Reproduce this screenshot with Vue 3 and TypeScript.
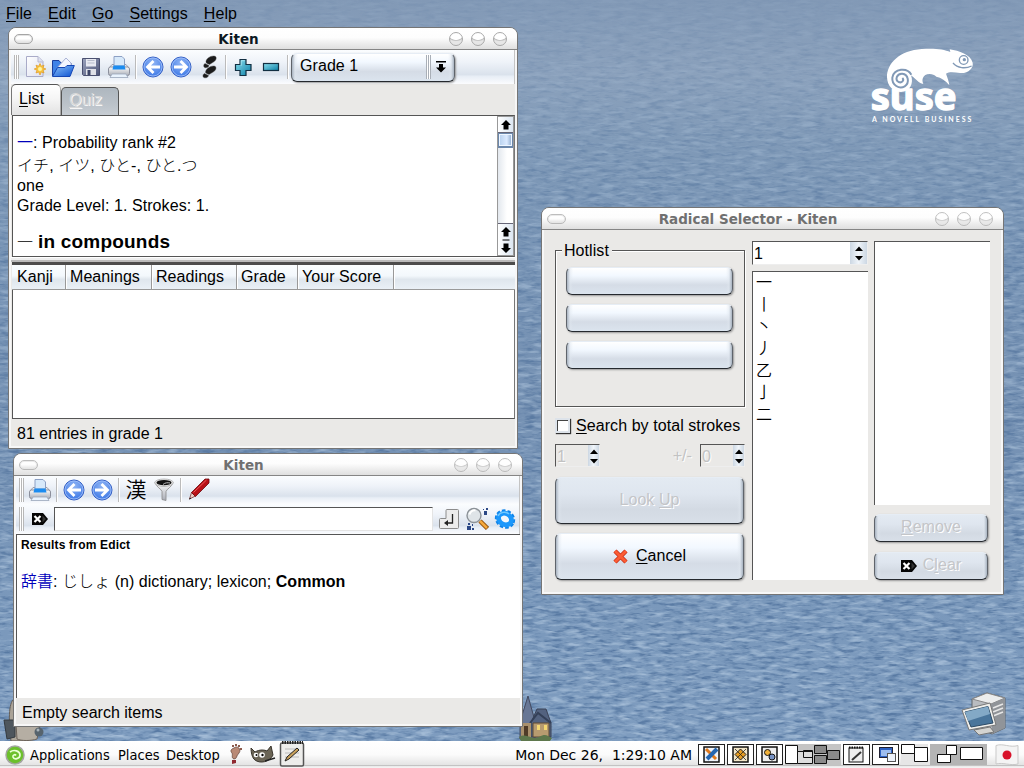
<script setup lang="ts">
type Item = { id: string; kind: 'icon' | 'sep' }
const icon = (id: string): Item => ({ id, kind: 'icon' })
const sep = (id: string): Item => ({ id, kind: 'sep' })

const menus: string[] = ['File', 'Edit', 'Go', 'Settings', 'Help']
const mainTools: Item[] = [
  icon('new'), icon('open'), icon('save'), icon('print'), sep('a'),
  icon('back'), icon('forward'), icon('feet'), sep('b'),
  icon('plus'), icon('minus'), sep('c'),
]
const searchTools: Item[] = [
  icon('print'), sep('a'), icon('back'), icon('forward'), sep('b'),
  icon('kanji'), icon('funnel'), sep('c'), icon('pencil'),
]
const columns = [
  { label: 'Kanji', w: 53 },
  { label: 'Meanings', w: 86 },
  { label: 'Readings', w: 85 },
  { label: 'Grade', w: 61 },
  { label: 'Your Score', w: 96 },
]
const radicals: string[] = ['一', '丨', '丶', '丿', '乙', '亅', '二']
</script>

<template>
  <div class="desktop">
    <svg class="defs" width="0" height="0" aria-hidden="true">
      <defs>
        <radialGradient id="gBlue" cx=".5" cy=".3" r=".7">
          <stop offset="0" stop-color="#8fb4f4" /><stop offset="1" stop-color="#3c78e6" />
        </radialGradient>
        <linearGradient id="gFolder" x1="0" y1="0" x2="1" y2="1">
          <stop offset="0" stop-color="#8cc4fb" /><stop offset="1" stop-color="#0a4fd0" />
        </linearGradient>
        <linearGradient id="gTeal" x1="0" y1="0" x2="1" y2="1">
          <stop offset="0" stop-color="#8ce0ee" /><stop offset="1" stop-color="#0a7ea6" />
        </linearGradient>
        <linearGradient id="gGrey" x1="0" y1="0" x2="0" y2="1">
          <stop offset="0" stop-color="#fdfdfd" /><stop offset="1" stop-color="#a9adb6" />
        </linearGradient>
        <linearGradient id="gSave" x1="0" y1="0" x2="1" y2="1">
          <stop offset="0" stop-color="#9ba3bd" /><stop offset="1" stop-color="#4d5577" />
        </linearGradient>
        <linearGradient id="gSheet" x1="0" y1="0" x2="1" y2="1">
          <stop offset="0" stop-color="#fff" /><stop offset="1" stop-color="#dcdff0" />
        </linearGradient>
      </defs>
      <symbol id="i-new" viewBox="0 0 24 24">
        <path d="M3.500 1.500H15L20 6.500V21.500H3.500Z" fill="url(#gSheet)" stroke="#a9abc8" />
        <path d="M15 1.500V7H20" fill="#dfe1f0" stroke="#b5b7d0" />
        <path d="M17 8.500l1.300 2.700 2.700-1-1 2.700 2.900 1.100-2.900 1.300 1 2.700-2.700-1L17 20l-1.300-3-2.700 1 1-2.700-2.800-1.300 2.800-1.100-1-2.700 2.700 1z" fill="#f8c440" stroke="#e19a20" stroke-width=".7" />
        <circle cx="17" cy="14" r="2" fill="#fff5a0" />
      </symbol>
      <symbol id="i-open" viewBox="0 0 24 24">
        <path d="M1.500 21V5.500H8L10 8H20V12" fill="#3f83e8" stroke="#1c3f9c" />
        <path d="M6 13L15 3l5 5v6z" fill="#f3f6ff" stroke="#aab4d6" />
        <path d="M1.500 21.500L6.500 12.500H14L16 10.500H23.300L19 21.500Z" fill="url(#gFolder)" stroke="#1546b4" />
      </symbol>
      <symbol id="i-save" viewBox="0 0 24 24">
        <path d="M3.500 3.500H20.500V20.500H4.500L3.500 19.500Z" fill="url(#gSave)" stroke="#4a5070" />
        <path d="M7 4H17V11.500H7Z" fill="#e8eaf2" /><path d="M8.500 5.500h7M8.500 8h7" stroke="#b7bccb" />
        <path d="M7 14h10v6H7Z" fill="#dfe1e8" /><path d="M8.500 15h3v5h-3z" fill="#3d4668" />
      </symbol>
      <symbol id="i-print" viewBox="0 0 24 24">
        <path d="M2.500 12.500L5 9.500H19L21.500 12.500Z" fill="#e8e9ee" stroke="#999dab" />
        <path d="M7 11V1.500H15L17.500 4V11Z" fill="#d7e9fa" stroke="#8ca0c4" />
        <rect x="1.500" y="12" width="21" height="8.500" rx="2" fill="url(#gGrey)" stroke="#8b8f9c" />
        <path d="M6.500 10.500H17.500L18.500 14.500H5.500Z" fill="#1b8cf0" />
        <path d="M5 19H19L21 22.500H3Z" fill="#e9f3fd" stroke="#99a6ba" stroke-width=".8" />
      </symbol>
      <symbol id="i-back" viewBox="0 0 24 24">
        <circle cx="12" cy="12" r="10" fill="url(#gBlue)" stroke="#3560c4" />
        <circle cx="12" cy="12" r="9" fill="none" stroke="#a5c3fa" stroke-width=".8" />
        <path d="M19 12H7M12.500 6L6.500 12l6 6" fill="none" stroke="#fff" stroke-width="2.800" />
      </symbol>
      <symbol id="i-forward" viewBox="0 0 24 24">
        <circle cx="12" cy="12" r="10" fill="url(#gBlue)" stroke="#3560c4" />
        <circle cx="12" cy="12" r="9" fill="none" stroke="#a5c3fa" stroke-width=".8" />
        <path d="M5 12H17M11.500 6l6 6-6 6" fill="none" stroke="#fff" stroke-width="2.800" />
      </symbol>
      <symbol id="i-feet" viewBox="0 0 24 24">
        <g fill="#1c1c1c" stroke="#4a4a4a" stroke-width=".4">
          <path d="M9 7.500C8.500 4 13 .8 17 1C20.500 1.200 19.500 5.500 16.500 7L12.500 9.500C11 9 10 8.500 9 7.500Z" />
          <path d="M8 8.500L12 10.500C11.500 13 7.500 13.500 6.800 11.500C6.500 10 7 9 8 8.500Z" />
          <path d="M8.500 17.500C8.500 14 13 10.800 17 11C20 11.200 19.500 15 16.500 16.800L12 19.500C10.500 19 9.500 18.500 8.500 17.500Z" />
          <path d="M7.500 18.500L11.500 20.500C11 23.300 6.500 23.500 6 21.500C5.700 20 6.500 19 7.500 18.500Z" />
        </g>
      </symbol>
      <symbol id="i-plus" viewBox="0 0 24 24">
        <path d="M9 4.500H15V9.500H20V15.500H15V20.500H9V15.500H4.500V9.500H9Z" fill="url(#gTeal)" stroke="#122f42" stroke-width="1.200" />
        <path d="M10.200 10.700V5.700h3.600" fill="none" stroke="#aeeaf4" stroke-width=".8" />
      </symbol>
      <symbol id="i-minus" viewBox="0 0 24 24">
        <rect x="4.500" y="8.500" width="15" height="7" fill="url(#gTeal)" stroke="#122f42" stroke-width="1.200" />
      </symbol>
      <symbol id="i-funnel" viewBox="0 0 24 24">
        <path d="M3 4.500C4 9 9.500 11 10 13.500V21.500L14 22.500V13.500C14.500 11 20 9 21 4.500Z" fill="url(#gGrey)" stroke="#888" stroke-width=".8" />
        <ellipse cx="12" cy="4.700" rx="9.300" ry="3.700" fill="#e6e6e6" stroke="#aaa" stroke-width=".8" />
        <ellipse cx="12" cy="4.700" rx="7.500" ry="2.600" fill="#111" /><path d="M11 6.500C13 4.500 16 4.500 18 5" stroke="#bbb" fill="none" />
      </symbol>
      <symbol id="i-pencil" viewBox="0 0 24 24">
        <path d="M3.500 21L5.500 14.500 9.500 18Z" fill="#e9cfc8" stroke="#6d2020" stroke-width=".7" />
        <path d="M5.500 14.500L19 1H23V5L9.500 18.500Z" fill="#b81016" stroke="#6b070b" stroke-width=".8" />
        <path d="M7.500 14.500L20.500 2" stroke="#ee5a5a" /><path d="M3 21.500l1-2 1.200 1.200z" fill="#111" />
      </symbol>
      <symbol id="i-clear" viewBox="0 0 16 14">
        <path d="M0 1H11L16 7 11 13H0Z" fill="#050505" />
        <path d="M2.500 4l6 6M8.500 4l-6 6" stroke="#fff" stroke-width="2.200" />
        <path d="M10.500 3.500V10.500L14 7Z" fill="#333" />
      </symbol>
      <symbol id="i-updown" viewBox="0 0 10 22">
        <path d="M1 9L5 4.500 9 9ZM1 14L5 18.500 9 14Z" />
      </symbol>
    </svg>

    <svg class="water" width="1024" height="768">
      <filter id="ripple" x="0" y="0" width="100%" height="100%" color-interpolation-filters="sRGB">
        <feTurbulence type="fractalNoise" baseFrequency="0.08 0.3" numOctaves="3" seed="8" />
        <feColorMatrix values="0 0 0 0 .24  0 0 0 0 .38  0 0 0 0 .56  3 0 0 0 -1.350" />
      </filter>
      <filter id="glint" x="0" y="0" width="100%" height="100%" color-interpolation-filters="sRGB">
        <feTurbulence type="fractalNoise" baseFrequency="0.06 0.26" numOctaves="3" seed="21" />
        <feColorMatrix values="0 0 0 0 .74  0 0 0 0 .82  0 0 0 0 .9  3 0 0 0 -1.400" />
      </filter>
      <linearGradient id="fade" x1="0" y1="0" x2="0" y2="1">
        <stop offset="0" stop-color="#222" /><stop offset=".12" stop-color="#555" /><stop offset=".35" stop-color="#aaa" /><stop offset="1" stop-color="#fff" />
      </linearGradient>
      <mask id="depth"><rect width="1024" height="768" fill="url(#fade)" /></mask>
      <g mask="url(#depth)">
        <rect width="1024" height="768" filter="url(#ripple)" />
        <rect width="1024" height="768" filter="url(#glint)" />
      </g>
    </svg>

    <nav class="menubar">
      <span v-for="m in menus" :key="m"><u>{{ m[0] }}</u>{{ m.slice(1) }}</span>
    </nav>

    <svg class="suse" viewBox="0 0 450 300">
      <path fill="#fff" d="M111 142C110 100 150 61 215 57C250 54 282 57 301 66L299 58C327 62 362 74 368 98C371 114 355 131 330 129C312 127 298 125 288 131C293 145 297 155 298 166C288 152 273 143 259 140C251 131 235 130 226 135C216 143 216 152 220 162C209 160 202 153 197 148C191 142 186 138 183 136C192 160 180 186 153 186C129 186 112 168 111 142Z" />
      <path d="M184 134C172 112 132 114 127 143C125 166 148 178 164 169C180 158 175 133 157 131C140 130 134 149 146 156C155 160 164 151 157 144" fill="none" stroke="#8199b6" stroke-width="6" />
      <circle cx="341" cy="90" r="13" fill="none" stroke="#8199b6" stroke-width="4" />
      <circle cx="343" cy="89" r="5" fill="#8199b6" />
      <path d="M309 99C323 115 346 117 365 108" fill="none" stroke="#8199b6" stroke-width="4" />
      <text x="62" y="239" class="suse-word" textLength="258" lengthAdjust="spacingAndGlyphs">suse</text>
      <text x="66" y="275" class="suse-tag" textLength="298">A NOVELL BUSINESS</text>
    </svg>

    <svg class="trash" viewBox="0 0 42 46">
      <path d="M8 44C6 30 5 8 10 3H25V44Z" fill="#aaa398" stroke="#665f58" />
      <path d="M1 23H12V40L4 42Z" fill="#4e565d" stroke="#343a40" />
      <path d="M13 27H37L34 42C28 44 18 44 14 42Z" fill="#b5aea3" stroke="#6b6259" />
      <circle cx="36" cy="35" r="4.500" fill="#56636d" /><circle cx="35" cy="33" r="1.500" fill="#a8b3ba" />
    </svg>
    <svg class="house" viewBox="0 0 36 46">
      <path d="M3 26L11 0L18 25V43H3Z" fill="#687795" stroke="#434a60" />
      <path d="M14 27L20 13 29 13 34 27V41H14Z" fill="#53627f" stroke="#3a4256" />
      <path d="M16 27H32V41H16Z" fill="#b79b70" stroke="#5c4934" />
      <path d="M13 27L21 17 34 27" fill="none" stroke="#344058" stroke-width="2" />
      <path d="M20 29h3v5h-3zM27 29h3v5h-3z" fill="#f5d872" />
      <path d="M4 27H14V42H4Z" fill="#a9906c" /><path d="M7 30h4v11H7Z" fill="#4f3b28" />
      <path d="M2 41C10 36 15 45 22 41S30 40 35 42L33 45H4Z" fill="#5d774c" />
    </svg>
    <svg class="computer" viewBox="0 0 48 44">
      <path d="M11 7L26 1 44 6V36L31 42 11 34Z" fill="#b9bcc0" stroke="#606469" />
      <path d="M11 7L26 1 44 6 30 12Z" fill="#eceded" stroke="#888" />
      <path d="M30 12L44 6V36L31 42Z" fill="#909499" />
      <path d="M32 16l10-4M32 20l10-4M32 24l10-4" stroke="#e7e7e7" stroke-width="1.500" />
      <path d="M1 18L29 11 35 33 8 38Z" fill="#f0efeb" stroke="#777" />
      <path d="M4 20L27 14.500 32 31 10 35Z" fill="#49759b" stroke="#2b4a66" />
      <path d="M4 20L27 14.500 29 22 7 29Z" fill="#83a9c6" />
      <path d="M13 38L29 35 33 40 18 43Z" fill="#d4d4d1" stroke="#777" />
    </svg>

    <!-- Kanji browser -->
    <section class="win win-main">
      <header class="title active"><i class="pill"></i><b>Kiten</b><i class="orb"></i><i class="orb"></i><i class="orb"></i></header>
      <div class="toolbar t-main">
        <i class="grip"></i>
        <template v-for="t in mainTools" :key="t.id">
          <i v-if="t.kind === 'sep'" class="sep"></i>
          <span v-else class="cell"><svg width="24" height="24"><use :href="'#i-' + t.id" /></svg></span>
        </template>
        <div class="btn combo">
          <span>Grade 1</span><i class="ridges"></i>
          <svg width="10" height="12" viewBox="0 0 10 12"><path d="M0 0H10V1.500H0ZM3 3H7V6.500H10L5 11.500 0 6.500H3Z" /></svg>
        </div>
      </div>
      <div class="tabs"><span class="tab on"><u>L</u>ist</span><span class="tab off"><u>Q</u>uiz</span></div>
      <div class="info">
        <div class="info-text">
          <p class="l1"><a>一</a>: Probability rank #2</p>
          <p class="l2">イチ, イツ, ひと-, ひと.つ</p>
          <p class="l3">one</p>
          <p class="l4">Grade Level: 1. Strokes: 1.</p>
          <h3><span>一</span> in compounds</h3>
        </div>
        <div class="scroll">
          <span class="sbtn"><svg width="10" height="10" viewBox="0 0 10 10"><path d="M5 0L10 5H7.500V9.500H2.500V5H0Z" /></svg></span>
          <span class="thumb"></span><span class="track"></span>
          <span class="sbtn double"><svg width="10" height="26" viewBox="0 0 10 26"><path d="M5 0L10 5H7.500V9.500H2.500V5H0ZM1.500 12.500H8.500V13.500H1.500ZM5 26L10 21H7.500V16.500H2.500V21H0Z" /></svg></span>
        </div>
      </div>
      <div class="splitter"></div>
      <div class="thead"><span v-for="c in columns" :key="c.label" :style="{ width: c.w + 'px' }">{{ c.label }}</span></div>
      <div class="tbody"></div>
      <footer>81 entries in grade 1</footer>
    </section>

    <!-- Dictionary search -->
    <section class="win win-search">
      <header class="title"><i class="pill"></i><b>Kiten</b><i class="orb"></i><i class="orb"></i><i class="orb"></i></header>
      <div class="toolbar t-search">
        <i class="grip"></i>
        <template v-for="t in searchTools" :key="t.id">
          <i v-if="t.kind === 'sep'" class="sep"></i>
          <span v-else-if="t.id === 'kanji'" class="cell kanji">漢</span>
          <span v-else class="cell"><svg width="24" height="24"><use :href="'#i-' + t.id" /></svg></span>
        </template>
      </div>
      <div class="toolbar t-entry">
        <i class="grip"></i>
        <span class="cell"><svg width="16" height="14"><use href="#i-clear" /></svg></span>
        <div class="entry"></div>
        <span class="cell enter">
          <svg width="22" height="22" viewBox="0 0 22 22">
            <path d="M9 1.500H19.500Q20.500 1.500 20.500 2.500V19.500Q20.500 20.500 19.500 20.500H2.500Q1.500 20.500 1.500 19.500V11.500Q1.500 10.500 2.500 10.500H8V2.500Q8 1.500 9 1.500Z" fill="#ececec" stroke="#8c8c8c" />
            <path d="M14.500 6V15H8" fill="none" stroke="#222" stroke-width="1.300" /><path d="M6 15l4-3v6z" fill="#222" />
          </svg>
        </span>
        <span class="cell">
          <svg width="24" height="24" viewBox="0 0 24 24">
            <path d="M15 14L22.500 21.500" stroke="#8f4f0a" stroke-width="4.500" /><path d="M15 14L22 21" stroke="#f4a83c" stroke-width="2.500" />
            <circle cx="9" cy="8.500" r="7" fill="#dfe4e8" stroke="#8c9298" stroke-width="1.400" /><path d="M4.500 7.500a5 5 0 0 1 6-4" stroke="#fff" fill="none" stroke-width="2" />
            <path d="M19 4h3v4h-3zM21 1h2v2h-2zM18 2h1v1h-1zM2 19h4v4H2zM3 16h2v2H3zM7 17h1v2H7zM7 21h2v2H7z" fill="#2c4886" />
          </svg>
        </span>
        <span class="cell">
          <svg width="24" height="24" viewBox="0 0 24 24">
            <ellipse cx="12" cy="12" rx="8.800" ry="7.800" transform="rotate(30 12 12)" fill="none" stroke="#0f84ea" stroke-width="3.200" stroke-dasharray="3.400 1.900" />
            <ellipse cx="12" cy="12" rx="6.700" ry="5.500" transform="rotate(30 12 12)" fill="#f4f8fc" stroke="#1b97fb" stroke-width="4.800" />
            <path d="M5 9C7 5 13 4 16 7" fill="none" stroke="#6fc8ff" stroke-width="1.500" />
          </svg>
        </span>
      </div>
      <div class="results">
        <h4>Results from Edict</h4>
        <p><a>辞書</a>: じしょ (n) dictionary; lexicon; <b>Common</b></p>
      </div>
      <footer>Empty search items</footer>
    </section>

    <!-- Radical selector -->
    <section class="win win-radical">
      <header class="title"><i class="pill"></i><b>Radical Selector - Kiten</b><i class="orb"></i><i class="orb"></i><i class="orb"></i></header>
      <div class="dialog">
        <div class="col c1">
          <div class="group"><span class="legend">Hotlist</span>
            <div class="btn slot"></div><div class="btn slot"></div><div class="btn slot"></div>
          </div>
          <label class="check"><i></i><span><u>S</u>earch by total strokes</span></label>
          <div class="spins">
            <div class="spin dis"><span>1</span><i><svg width="10" height="22"><use href="#i-updown" /></svg></i></div>
            <span class="pm">+/-</span>
            <div class="spin dis"><span>0</span><i><svg width="10" height="22"><use href="#i-updown" /></svg></i></div>
          </div>
          <div class="btn big dim"><span>Look <u>U</u>p</span></div>
          <div class="btn big cancel">
            <svg width="15" height="15" viewBox="0 0 15 15">
              <path d="M2 2L13 13M13 2L2 13" stroke="#c42d14" stroke-width="4.500" /><path d="M2 2L13 13M13 2L2 13" stroke="#fb5b34" stroke-width="3" />
            </svg>
            <span><u>C</u>ancel</span>
          </div>
        </div>
        <div class="col c2">
          <div class="spin wide"><span>1</span><i><svg width="10" height="22"><use href="#i-updown" /></svg></i></div>
          <div class="list radicals"><span v-for="r in radicals" :key="r">{{ r }}</span></div>
        </div>
        <div class="col c3">
          <div class="list"></div>
          <div class="btn small dim"><span><u>R</u>emove</span></div>
          <div class="btn small dim"><svg width="16" height="14"><use href="#i-clear" /></svg><span>C<u>l</u>ear</span></div>
        </div>
      </div>
    </section>

    <!-- Panel -->
    <div class="panel">
      <svg class="geeko" width="20" height="20" viewBox="0 0 20 20">
        <circle cx="10" cy="10" r="9" fill="#6cc02c" stroke="#a3a7a0" stroke-width="1.500" />
        <path d="M5 7C9 4 15 6 15 10C15 14 9 15 8 12C7.500 10 10 9 11 10.500" fill="none" stroke="#eaffd8" stroke-width="1.700" />
      </svg>
      <span class="p1">Applications</span><span class="p2">Places</span><span class="p3">Desktop</span>
      <svg class="launch" width="80" height="27" viewBox="0 0 80 27">
        <path d="M7 7C10 4 15 8 12 12C9 15 10 18 7 18C4 17 6 14 5 12C3 10 4 8 7 7Z" fill="#b98a76" stroke="#5c3c30" stroke-width=".7" />
        <path d="M5 4h2v2H5zM8 3h2v2H8zM11 4h2v2h-2zM13 7h2v2h-2z" fill="#8c5b4c" /><path d="M5 19L9 19 9 22 5 23Z" fill="#8f2930" />
        <path d="M24 7L28 11C33 8 38 9 40 10L44 5 46 14C43 21 33 23 28 19C25 17 24 11 24 7Z" fill="#6b6556" stroke="#38342c" />
        <circle cx="29" cy="14" r="2.300" fill="#fff" /><circle cx="35" cy="14" r="2.800" fill="#fff" /><circle cx="29.500" cy="14" r="1" /><circle cx="35.500" cy="14" r="1.200" />
        <path d="M38 20L48 17" stroke="#222" stroke-width="1.500" />
        <rect x="53.500" y="2" width="23" height="23" rx="1.500" fill="#ededeb" stroke="#555" stroke-width="1.500" />
        <path d="M55 1.500H76" stroke="#222" stroke-width="3" stroke-dasharray="1.500 1" />
        <path d="M58 8h14M58 12h14M58 16h14" stroke="#bbb" /><path d="M58 20L60 16 70 7 72 9 62 18Z" fill="#c9a15b" stroke="#222" />
      </svg>
      <span class="clock">Mon Dec 26, &nbsp;1:29:10 AM</span>
      <svg class="tray" width="326" height="27" viewBox="698 741 326 27">
        <g fill="#fff" stroke="#222">
          <rect x="698.500" y="744.500" width="26" height="20" /><rect x="727.500" y="744.500" width="26" height="20" /><rect x="756.500" y="744.500" width="26" height="20" />
          <rect x="843.500" y="744.500" width="26" height="20" /><rect x="872.500" y="744.500" width="26" height="20" />
        </g>
        <rect x="785" y="744" width="56" height="21" fill="#c4c4c4" /><rect x="901" y="744" width="27" height="21" fill="#e6e6e6" /><rect x="930" y="744" width="57" height="21" fill="#b4b4b4" />
        <g stroke="#111" fill="#fff">
          <path d="M785.500 745.500h12v18h-12z" /><path d="M797.500 751.500h15v12h-15zM803.500 750.500h9v7h-9z" fill="#ddd" />
          <path d="M814.500 745.500h12v8h-12zM827.500 750.500h12v9h-12zM814.500 755.500h12v8h-12z" fill="#8a8a8a" />
          <path d="M901.500 744.500h13v9h-13zM914.500 747.500h13v14h-13z" /><path d="M946.500 745.500h10v9h-10zM937.500 754.500h13v8h-13zM960.500 747.500h22v12h-22z" />
        </g>
        <rect x="704" y="747" width="15" height="15" fill="#eef3fa" stroke="#111" stroke-width="1.500" /><path d="M706 749l10 10" stroke="#e07a1c" stroke-width="3" /><path d="M717 749l-10 10" stroke="#2466b0" stroke-width="4" />
        <rect x="733" y="747" width="15" height="15" fill="#f2e6c8" stroke="#111" stroke-width="1.500" /><path d="M740.500 749l5.500 5.500-5.500 5.500-5.500-5.500z" fill="#e59b20" stroke="#222" /><path d="M735 749l11 11M746 749l-11 11" stroke="#222" stroke-width=".8" />
        <rect x="762" y="747" width="15" height="15" fill="#eee" stroke="#111" stroke-width="1.500" /><circle cx="767.500" cy="752.500" r="3" fill="#f0b13a" stroke="#111" /><circle cx="772" cy="757" r="3" fill="#7893c4" stroke="#111" />
        <rect x="849" y="748" width="14" height="14" fill="#eee" stroke="#111" /><path d="M849 747.500h14" stroke="#111" stroke-width="2" stroke-dasharray="1.500 1" /><path d="M852 760l9-8" stroke="#333" stroke-width="2" />
        <rect x="879.500" y="747.500" width="13" height="10" fill="#2d62c4" stroke="#223" /><rect x="881" y="750" width="10" height="6" fill="#9dbdf0" /><rect x="887.500" y="753.500" width="8" height="8" fill="#eef3fb" stroke="#555" />
        <path d="M996 745.500C1003 743 1010 748 1018 745.500V764C1010 766 1003 762 996 764Z" fill="#f4f4f4" stroke="#c9c9c9" /><circle cx="1007" cy="755" r="4.500" fill="#d8122a" />
      </svg>
    </div>
  </div>
</template>

<style>
html, body { margin: 0; overflow: hidden; }
</style>

<style scoped>
* { box-sizing: border-box; }
.desktop {
  position: relative; width: 1024px; height: 768px; overflow: hidden; color: #000;
  font: 300 16px/20px "Liberation Sans", "Noto Sans CJK JP", sans-serif; letter-spacing: .07px; white-space: nowrap;
  background: linear-gradient(180deg, #8299b6 0, #8ba1bc 75px, #7f99b7 150px, #7894b5 260px, #7591b3 420px, #7a98bb 600px, #7f9dc0 768px);
}
.defs, .water { position: absolute; left: 0; top: 0; }
.water { opacity: .6; }
p, h3, h4 { margin: 0; }
b { font-weight: 700; }
u { text-underline-offset: 2px; text-decoration-thickness: 1px; text-decoration-skip-ink: none; }
a { color: #00b; font-weight: 350; }

.menubar { position: absolute; left: 6px; top: 4px; display: flex; gap: 16px; }
.suse { position: absolute; left: 850px; top: 30px; width: 150px; height: 100px; }
.suse-word { font: bold 115px "Noto Sans", "DejaVu Sans", sans-serif; letter-spacing: 0; fill: #fff; stroke: #fff; stroke-width: 4px; stroke-linejoin: round; }
.suse-tag { font: bold 21px Lato, sans-serif; fill: #fff; }
.trash { position: absolute; left: 3px; top: 697px; width: 42px; height: 46px; }
.house { position: absolute; left: 517px; top: 696px; width: 36px; height: 46px; }
.computer { position: absolute; left: 961px; top: 692px; width: 48px; height: 44px; }

.win {
  position: absolute; display: flex; flex-direction: column; background: #eae9e7;
  border: 1px solid #757575; border-radius: 8px 8px 0 0; box-shadow: inset 2px 0 #f7f7f7, inset -2px 0 #f7f7f7, inset 0 -2px #f7f7f7;
  padding: 0 2px 2px;
}
.win-main { left: 8px; top: 27px; width: 510px; height: 422px; }
.win-search { left: 13px; top: 453px; width: 510px; height: 274px; }
.win-radical { left: 541px; top: 207px; width: 463px; height: 388px; }

.title {
  position: relative; height: 22px; flex: none; margin: 0 -2px; padding: 0 10px 0 5px; display: flex; align-items: center; gap: 8px;
  border-bottom: 1px solid #858585; border-radius: 7px 7px 0 0; background: linear-gradient(#fff, #fdfdfd 45%, #dfdfdf);
  font: bold 13.5px "DejaVu Sans", sans-serif; letter-spacing: 0; color: #707070;
}
.title.active { color: #0c1822; }
.title b { flex: 1; text-align: center; padding-right: 5px; }
.pill { width: 19px; height: 10px; border: 1px solid #a5a5a5; border-radius: 6px; background: linear-gradient(#fff 45%, #dcdcdc); box-shadow: inset 0 0 0 1px #e3e3e3; }
.orb { width: 14px; height: 14px; border: 1px solid #a8a8a8; border-radius: 50%; background: radial-gradient(ellipse 75% 60% at 50% 5%, #fff 82%, #bdbdbd 92%, #e6e6e6 110%); }
.title:not(.active) .pill, .title:not(.active) .orb { opacity: .72; }

.toolbar { display: flex; align-items: center; padding-left: 3px; flex: none; border-right: 1px solid #c4c4c4; background: linear-gradient(#fbfdff, #eff3f9 35%, #dae2ec 72%, #e8eef6 78%, #fbfcfe); }
.t-main { height: 34px; }
.t-search { height: 28px; }
.t-entry { height: 30px; }
.grip { width: 5px; height: 24px; margin-right: 2px; background: repeating-linear-gradient(90deg, #b7b7b7 0 1px, #fff 1px 2px); }
.cell { width: 28px; display: flex; justify-content: center; align-items: center; }
.kanji { font: 350 21px/24px "Noto Sans CJK JP", sans-serif; position: relative; top: -2px; }
.sep { width: 6px; height: 24px; background: linear-gradient(90deg, transparent 2px, #bbb 2px 3px, #fff 3px 4px, transparent 4px); }

.btn {
  position: relative; border: 1px solid; border-color: #e6edf5 #5f646b #25292e #5f646b; border-radius: 6px;
  background: linear-gradient(90deg, #a9b4c1 0, #dfe6ee88 3px, transparent 6px, transparent calc(100% - 6px), #dfe6ee88 calc(100% - 3px), #a9b4c1), linear-gradient(#fff, #f2f8ff 30%, #d5dce6 65%, #dbe4ee);
  box-shadow: 1px 1px 2px #999;
}
.combo { width: 164px; height: 29px; display: flex; align-items: center; padding: 0 8px; }
.combo span { flex: 1; position: relative; top: -1px; }
.ridges { width: 5px; height: 24px; margin-right: 5px; background: repeating-linear-gradient(90deg, #a9afb7 0 1px, #fff 1px 2px); }

.tabs { display: flex; height: 31px; flex: none; align-items: flex-end; }
.tab { border: 1px solid #555; border-bottom: 0; border-radius: 5px 5px 0 0; padding-left: 7px; }
.on { width: 50px; height: 31px; line-height: 28px; background: linear-gradient(#fff, #f4f4f4 50%, #e2e2e2); border-color: #555 #aaa #fff #777; }
.off { width: 58px; height: 28px; line-height: 24px; color: #d8d8d8; text-shadow: 1px 1px #f6f6f6; background: linear-gradient(#aeb7bf, #bbc2c9 60%, #c7cdd3); }
.info { display: flex; height: 142px; flex: none; background: #fff; border: 1px solid #555; border-right-color: #777; margin-left: 1px; }
.info-text { flex: 1; padding: 17px 0 0 4px; }
.l1 { height: 23px; }
.l2 { height: 20px; }
.l3 { height: 20px; }
.l4 { height: 32px; }
h3 { font-size: 19px; line-height: 27px; font-weight: 700; letter-spacing: .2px; }
h3 span { font-weight: 300; font-size: 16px; letter-spacing: -.5px; }
.scroll { width: 17px; display: flex; flex-direction: column; border: 1px solid #999; background: linear-gradient(90deg, #e3e8ee, #fff 60%); }
.sbtn { height: 16px; flex: none; display: flex; align-items: center; justify-content: center; background: linear-gradient(90deg, #fff, #dce6f1); border-bottom: 1px solid #667; }
.thumb { height: 15px; background: linear-gradient(90deg, #b6d0ee, #dbeaff 60%, #8ba8cc); border: 1px solid #6b87ab; border-bottom-width: 2px; box-shadow: inset 0 0 0 1px #eef6ff; }
.track { flex: 1; }
.double { height: 32px; border-top: 1px solid #667; border-bottom: 0; }
.splitter { height: 5px; flex: none; background: linear-gradient(#fff 1px, #eee 1px 3px, #bbb 3px); }
.thead { height: 28px; flex: none; margin-left: 1px; padding-left: 1px; display: flex; border-top: 3px solid #4c4c4c; border-bottom: 1px solid #999; background: linear-gradient(#fafdff, #f3f8fc 45%, #dfe6ed 60%, #eaf0f6); }
.thead span { border-right: 1px solid #999; box-shadow: 1px 0 #fff; padding-left: 4px; line-height: 23px; }
.tbody { flex: 1; margin-left: 1px; background: #fff; border: 1px solid #555; border-top: 0; border-right-color: #777; }
footer { height: 27px; flex: none; padding-left: 6px; line-height: 29px; letter-spacing: 0; }
.win-search footer { height: 26px; }

.entry { width: 379px; height: 24px; background: #fff; border: solid; border-width: 1px; border-color: #555 #e4e4e4 #e4e4e4 #555; }
.enter { margin-left: 2px; }
.results { flex: 1; background: #fff; border-top: 1px solid #555; border-left: 1px solid #555; padding-left: 4px; }
h4 { font-size: 12px; line-height: 20px; height: 37px; font-weight: 700; letter-spacing: .18px; }
.results p { letter-spacing: .04px; }

.dialog { flex: 1; display: flex; padding: 11px 11px 12px; }
.col { display: flex; flex-direction: column; }
.c1 { width: 190px; margin-right: 7px; }
.c2 { width: 116px; margin-right: 6px; }
.c3 { width: 116px; }
.group { position: relative; margin-top: 9px; height: 157px; flex: none; border: 1px solid #555; box-shadow: inset 1px 1px #fff, 1px 1px #fff; padding: 16px 11px 0 10px; }
.legend { position: absolute; left: 6px; top: -10px; padding: 0 3px 0 2px; background: #eae9e7; }
.slot { height: 28px; margin-bottom: 9px; }
.check { display: flex; align-items: center; gap: 6px; margin-top: 9px; height: 20px; }
.check i { width: 15px; height: 15px; position: relative; top: -1px; background: #fff; border: 2px solid #dde3ea; box-shadow: inset 1px 1px #444, 1px 1px 1px #333; }
.spins { display: flex; margin-top: 8px; height: 23px; }
.spin { width: 45px; height: 23px; display: flex; border: 1px solid; border-color: #555 #eee #eee #555; line-height: 24px; }
.spin span { flex: 1; padding-left: 1px; }
.spin i { width: 11px; display: flex; justify-content: center; background: linear-gradient(90deg, #ccd7e3, #f0f5fa, #ccd7e3); }
.spin.wide { width: 116px; height: 24px; background: #fff; flex: none; }
.spin.wide i { width: 17px; }
.dis { color: #c2c2c2; text-shadow: 1px 1px #fff; }
.pm { flex: 1; text-align: right; padding-right: 8px; line-height: 23px; color: #c2c2c2; text-shadow: 1px 1px #fff; }
.big { width: 189px; height: 47px; margin-top: 10px; display: flex; align-items: center; justify-content: center; gap: 8px; }
.big + .big { margin-top: 9px; }
.big span, .small span { position: relative; top: -1px; }
.dim { color: #c4c5c8; text-shadow: 1px 1px #fff; background: linear-gradient(90deg, #a9b4c1 0, #dfe6ee88 3px, transparent 6px, transparent calc(100% - 6px), #dfe6ee88 calc(100% - 3px), #a9b4c1), linear-gradient(#e3eaf2, #dfe6ef 35%, #d3dae3 70%, #d8dfe8); }
.list { background: #fff; border-top: 1px solid #555; border-left: 1px solid #555; }
.radicals { margin-top: 6px; height: 309px; display: flex; flex-direction: column; padding-left: 3px; font-weight: 350; }
.radicals span { height: 22px; line-height: 22px; }
.c3 .list { height: 264px; }
.small { width: 114px; height: 28px; margin-top: 9px; display: flex; align-items: center; justify-content: center; gap: 6px; }
.small + .small { margin-top: 10px; }

.panel {
  position: absolute; left: 0; top: 741px; width: 1024px; height: 27px; display: flex; align-items: center;
  background: linear-gradient(#fff, #fbfbfb 50%, #e4e4e4 88%, #bbb 90%, #f2f2f2 95%); font: 14.5px/27px "DejaVu Sans Condensed", "DejaVu Sans", sans-serif; letter-spacing: 0;
}
.panel span { position: relative; top: 1px; }
.geeko { margin-left: 5px; }
.p1 { margin-left: 5px; width: 88px; }
.p2 { width: 48px; }
.p3 { width: 58px; }
.launch { margin-left: 3px; }
.clock { margin-left: auto; margin-right: 6px; font: 14px/27px "DejaVu Sans", sans-serif; }
</style>
